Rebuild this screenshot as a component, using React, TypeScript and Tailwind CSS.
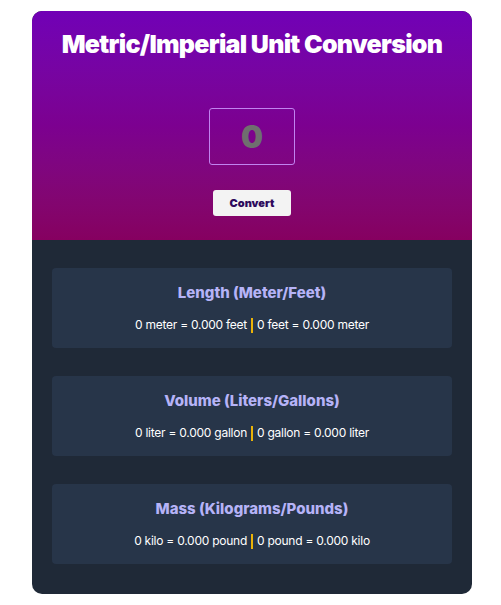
import { useState } from "react"

type Unit = {
  title: string
  a: string
  b: string
  factor: number
}

const units: Unit[] = [
  { title: "Length (Meter/Feet)", a: "meter", b: "feet", factor: 3.281 },
  { title: "Volume (Liters/Gallons)", a: "liter", b: "gallon", factor: 0.264 },
  { title: "Mass (Kilograms/Pounds)", a: "kilo", b: "pound", factor: 2.204 },
]

const App = () => {
  const [value, setValue] = useState("0")
  const [num, setNum] = useState(0)

  return (
    <div className="min-h-screen bg-white pt-[11px] font-['Inter',sans-serif]">
      <div className="ml-[32px] w-[440px] overflow-hidden rounded-[10px] bg-[#1f2937]">
        <div className="flex h-[229px] flex-col items-center bg-gradient-to-b from-[#7100b6] via-[#7c0090] to-[#860060]">
          <h1 className="mt-[16px] text-[25px] font-black leading-[34px] tracking-[-0.7px] text-white">
            Metric/Imperial Unit Conversion
          </h1>
          <input
            value={value}
            onChange={(e) => setValue(e.target.value)}
            className="mt-[47px] h-[57px] w-[86px] rounded-[3px] border border-[#c183f0] bg-transparent text-center text-[31px] font-black text-[#6f6f6f] outline-none"
          />
          <button
            onClick={() => setNum(Number(value) || 0)}
            className="mt-[25px] h-[26px] w-[78px] rounded-[3px] bg-[#f3f3f3] text-[11px] font-black text-[#2d0a5c]"
          >
            Convert
          </button>
        </div>
        <div className="flex flex-col gap-[28px] px-[20px] pb-[30px] pt-[28px]">
          {units.map((u) => (
            <div key={u.title} className="flex h-[80px] flex-col items-center rounded-[4px] bg-[#273549]">
              <h2 className="mt-[15px] text-[15px] font-extrabold leading-[20px] text-[#b6b3f7]">{u.title}</h2>
              <p className="mt-[14px] flex items-center text-[12px] leading-[16px] tracking-[-0.25px] text-white">
                <span>{num} {u.a} = {(num * u.factor).toFixed(3)} {u.b}</span>
                <span className="mx-[4px] h-[15px] w-[2px] bg-[#eab308]" />
                <span>{num} {u.b} = {(num / u.factor).toFixed(3)} {u.a}</span>
              </p>
            </div>
          ))}
        </div>
      </div>
    </div>
  )
}

export default App
